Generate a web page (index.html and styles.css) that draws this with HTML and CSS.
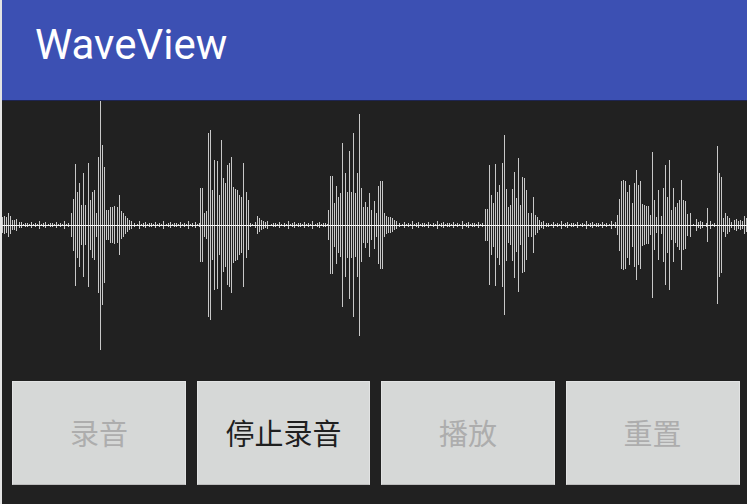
FILE: index.html
```html
<!DOCTYPE html>
<html lang="en">
<head>
  <title>WaveView</title>
  <meta name="viewport" content="width=device-width, initial-scale=1">
  <link rel="stylesheet" href="styles.css">
</head>
<body>
  <div class="app">
    <div class="topnav">
      <h1>WaveView</h1>
    </div>

    <div class="content">
      <svg id="wave" class="wave" width="745" height="279" viewBox="2 101 745 279"></svg>

      <div class="buttons">
        <button class="button off" disabled>录音</button>
        <button class="button">停止录音</button>
        <button class="button off" disabled>播放</button>
        <button class="button off" disabled>重置</button>
      </div>
    </div>
  </div>

  <script src="wave.js"></script>
</body>
</html>
```

FILE: styles.css
```css
html, body {
  margin: 0;
  height: 100%;
  overflow: hidden;
}
body {
  font-family: Roboto, "Noto Sans CJK SC", sans-serif;
  background-color: #212121;
}
.app {
  display: flex;
  flex-direction: column;
  height: 504px;
  border-left: 2px solid #e4e4e4;
  box-sizing: border-box;
}
.topnav {
  display: flex;
  align-items: center;
  height: 101px;
  padding: 0 0 11px 33px;
  background-color: #3c50b3;
  border-bottom: 1px solid #1d2452;
  box-sizing: border-box;
}
h1 {
  margin: 0;
  font-size: 42px;
  font-weight: 400;
  color: #fff;
}
.content {
  flex: 1;
  display: flex;
  flex-direction: column;
}
.wave {
  display: block;
  filter: blur(0.3px);
}
.buttons {
  display: grid;
  grid-template-columns: repeat(4, 1fr);
  gap: 10.6px;
  padding: 1px 7.5px 0 10px;
}
.button {
  height: 104px;
  padding: 0 0 3px;
  font-family: "Noto Sans CJK SC", sans-serif;
  font-size: 29px;
  color: #1f1f1f;
  background-color: #d6d8d7;
  border: 1px solid #e2e3e3;
  border-bottom-color: #bcbcbc;
  border-radius: 0;
}
.button.off {
  color: #adadad;
}
```

FILE: wave.js
```js
// half heights of the bars, one list per burst: [first x, heights...]
const STEP = 2.07;
const MID = 225;

const bursts = [
  [2, [8, 9, 8, 12, 9, 5, 5, 6, 3]],
  [71, [12, 26, 61, 33, 42, 20, 52, 20, 62, 25, 33, 35, 12, 68, 125, 80, 58, 15, 15, 18, 18, 19, 18, 30, 14, 12, 9, 7, 5, 4]],
  [200, [37, 37, 12, 14, 92, 95, 35, 65, 64, 30, 85, 47, 42, 60, 62, 68, 38, 36, 35, 30, 28, 62, 33, 25]],
  [257, [9, 7, 5, 4, 3, 4]],
  [328, [15, 49, 49, 22, 39, 28, 32, 82, 52, 33, 74, 33, 92, 32, 52, 111, 37, 18, 23, 18, 32, 15, 24, 12, 39, 44, 44, 12, 9, 8, 8, 7, 5, 4]],
  [485, [16, 16, 60, 30, 22, 61, 33, 40, 62, 90, 36, 18, 20, 36, 53, 27, 67, 20, 48, 47, 35, 12, 12, 28, 10, 8, 5, 3, 4]],
  [615, [3, 10, 26, 44, 45, 44, 33, 40, 22, 42, 55, 40, 44, 21, 20, 19, 19, 10, 73, 25, 8, 35, 9, 37, 60, 28, 65, 15, 37, 18, 22, 25, 45, 25, 24, 11, 12]],
  [696, [6, 3, 4, 3]],
  [707, [17]],
  [717, [79, 52, 48, 7, 12, 9, 7, 3, 5, 6, 4, 5, 4, 9, 7]]
];

// small noise between the bursts
const quiet = [2, 1, 3, 1, 2, 1, 4, 1, 2, 3, 1, 2];

const svg = document.getElementById("wave");
const NS = "http://www.w3.org/2000/svg";

function addLine(x1, y1, x2, y2, color) {
  const line = document.createElementNS(NS, "line");
  line.setAttribute("x1", x1);
  line.setAttribute("y1", y1);
  line.setAttribute("x2", x2);
  line.setAttribute("y2", y2);
  line.setAttribute("stroke", color);
  svg.appendChild(line);
}

// bars sit on whole pixels so the gaps between them stay visible
function bar(x, h) {
  const px = Math.round(x) + 0.5;
  addLine(px, MID - h, px, MID + h, "#c8c8c8");
}

// noise first, skipped where a burst is drawn
let n = 0;
for (let x = 2; x < 747; x += STEP) {
  const inBurst = bursts.some(([start, list]) => x >= start - 1 && x <= start + list.length * STEP);
  if (!inBurst) bar(x, quiet[n % quiet.length]);
  n++;
}

bursts.forEach(([start, list]) => {
  list.forEach((h, i) => bar(start + i * STEP, h));
});

addLine(2, MID + 0.5, 747, MID + 0.5, "#f4f4f4");
```
